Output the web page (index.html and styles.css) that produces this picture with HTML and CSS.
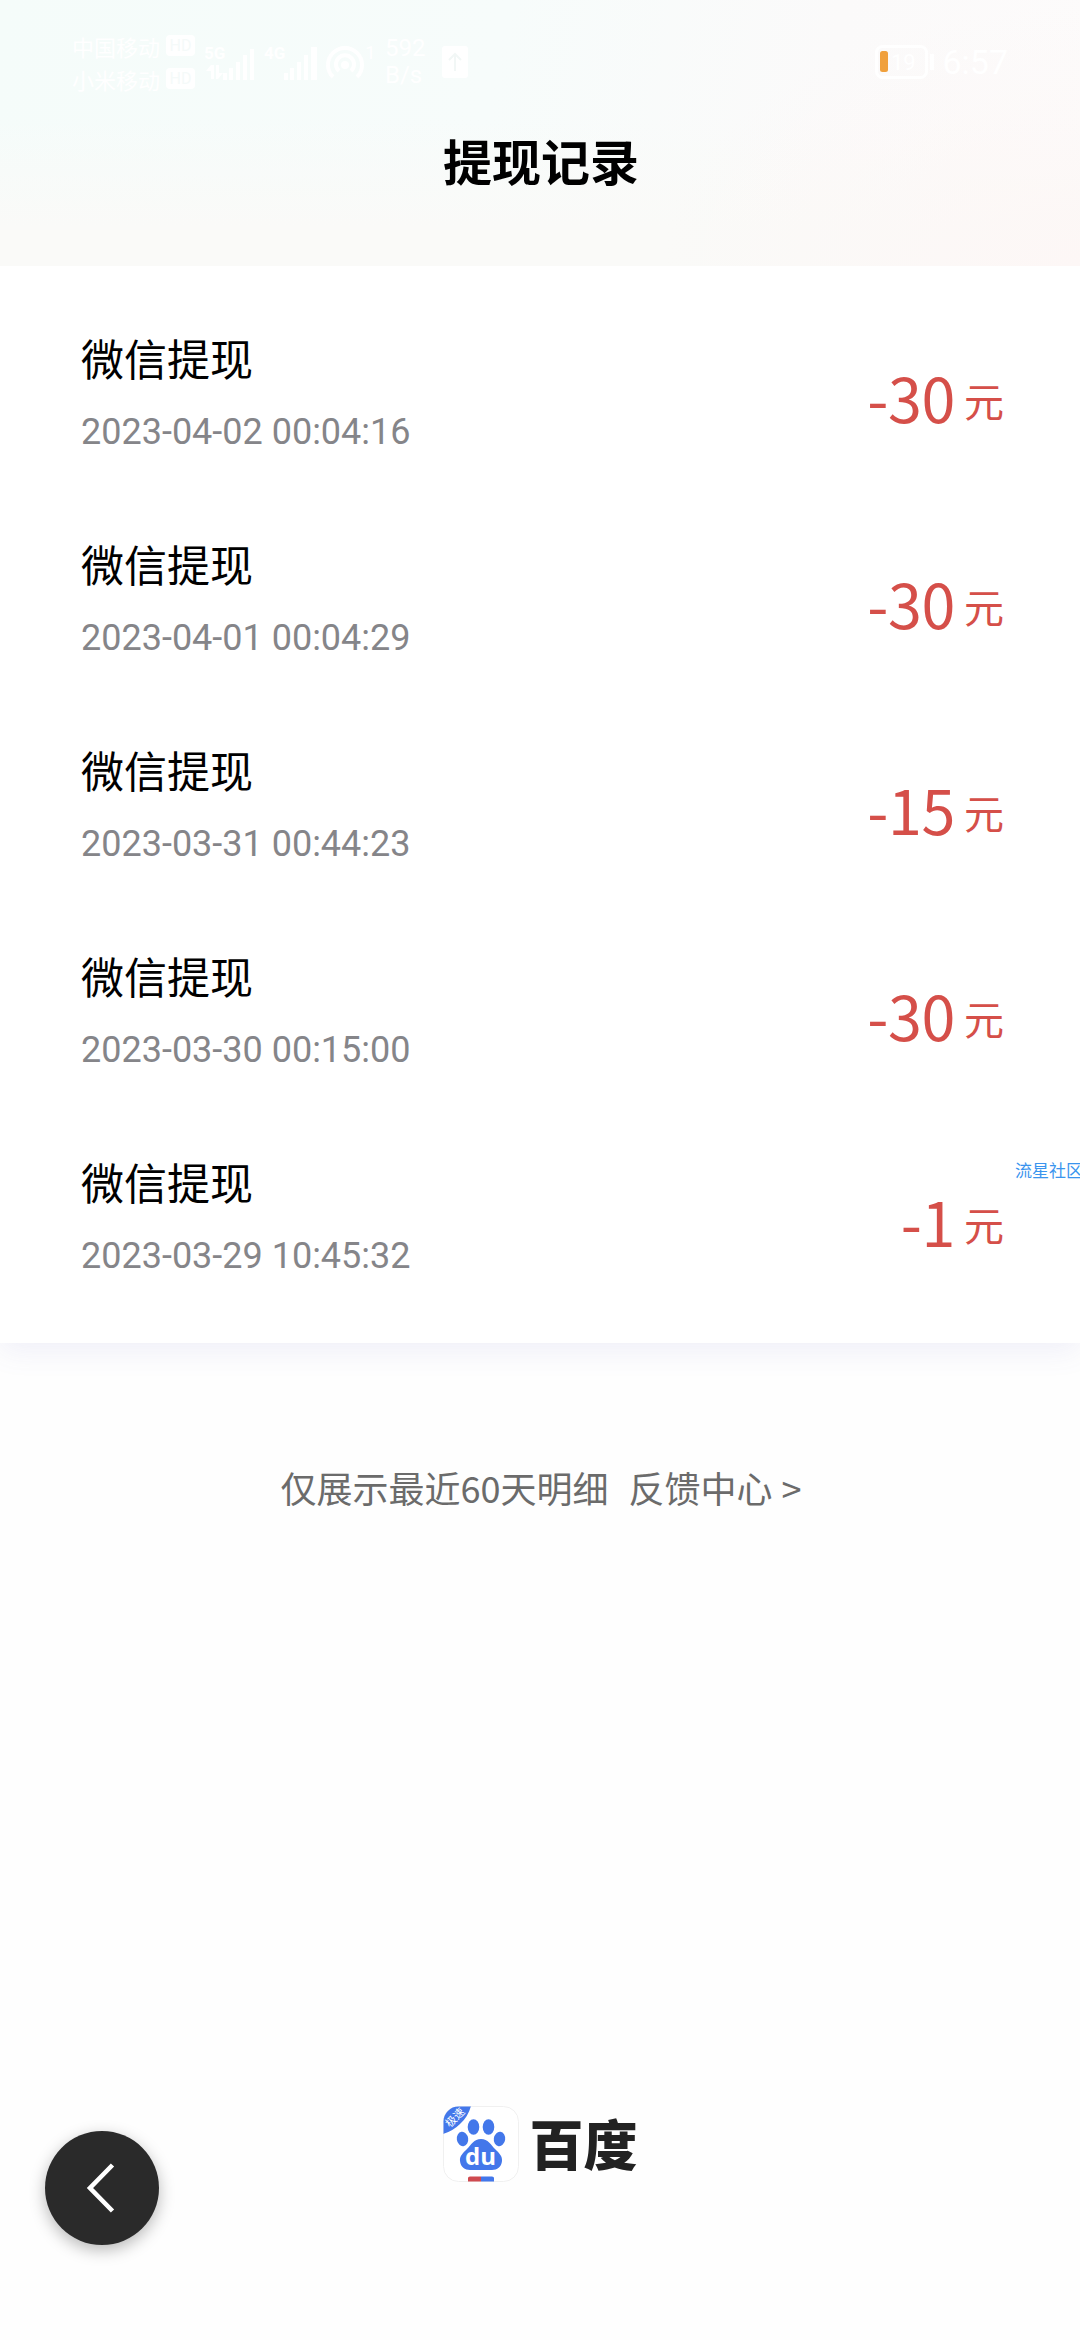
FILE: index.html
```html
<!DOCTYPE html>
<html lang="zh-CN">
<head>
<meta charset="utf-8">
<title>提现记录</title>
<link rel="stylesheet" href="styles.css">
</head>
<body>
<div class="screen">
  <header class="header">
    <div class="status">
      <div class="carriers">
        <div class="carrier">中国移动<span class="hd">HD</span></div>
        <div class="carrier">小米移动<span class="hd">HD</span></div>
      </div>
      <svg class="signals" width="178" height="46" viewBox="0 0 178 46" fill="#fff">
        <text x="-1" y="20" font-size="17" font-weight="700">5G</text>
        <path d="M1 32l5-6h3v14H6v-8zM11 26h3v8h4l-5 6h-2z"/>
        <path d="M18 34h4v7h-4zM24 29h4v12h-4zM31 23h4v18h-4zM38 16h4v25h-4zM45 10h4v31h-4z"/>
        <text x="59" y="20" font-size="17" font-weight="700">4G</text>
        <path d="M79 34h4v7h-4zM85 29h4v12h-4zM92 23h4v18h-4zM99 16h4v25h-4zM106 8h6v33h-6z"/>
        <g fill="none" stroke="#fff" stroke-width="4"><path d="M128 38a17 17 0 1 1 24 0"/><path d="M134 32a9 9 0 1 1 12 0"/></g>
        <circle cx="140" cy="26" r="4"/>
        <text x="160" y="20" font-size="19">1</text>
      </svg>
      <div class="speed"><span>592</span><span>B/s</span></div>
      <svg class="upload" width="26" height="32" viewBox="0 0 26 32"><rect width="26" height="32" rx="3" fill="#fff"/><path d="M13 25V9M7 14l6-6 6 6" fill="none" stroke="#f2f7f6" stroke-width="2"/></svg>
      <div class="clock">
        <svg width="60" height="34" viewBox="0 0 60 34"><rect x="1.500" y="1.500" width="50" height="31" rx="6" fill="none" stroke="#fff" stroke-width="3"/><rect x="5" y="6" width="8" height="21" rx="2.500" fill="#f0a03c"/><text x="16" y="25" font-size="22" fill="#fff">19</text><path d="M55 9h4v16h-4z" fill="#fff"/></svg>
        <span>6:57</span>
      </div>
    </div>
    <h1 class="title">提现记录</h1>
  </header>

  <main class="list">
    <div class="row"><div class="info"><div class="name">微信提现</div><div class="date">2023-04-02 00:04:16</div></div><div class="amount">-30<span class="unit">元</span></div></div>
    <div class="row"><div class="info"><div class="name">微信提现</div><div class="date">2023-04-01 00:04:29</div></div><div class="amount">-30<span class="unit">元</span></div></div>
    <div class="row"><div class="info"><div class="name">微信提现</div><div class="date">2023-03-31 00:44:23</div></div><div class="amount">-15<span class="unit">元</span></div></div>
    <div class="row"><div class="info"><div class="name">微信提现</div><div class="date">2023-03-30 00:15:00</div></div><div class="amount">-30<span class="unit">元</span></div></div>
    <div class="row"><div class="info"><div class="name">微信提现</div><div class="date">2023-03-29 10:45:32</div></div><div class="amount">-1<span class="unit">元</span></div></div>
  </main>

  <p class="note"><span>仅展示最近60天明细</span><a class="feedback">反馈中心<span class="arrow">&gt;</span></a></p>

  <footer class="brand">
    <svg class="logo" width="76" height="76" viewBox="0 0 76 76">
      <defs><clipPath id="tile"><rect x="0.500" y="0.500" width="75" height="75" rx="15"/></clipPath></defs>
      <rect x="0.500" y="0.500" width="75" height="75" rx="15" fill="#fff" stroke="#f0f0f0"/>
      <g clip-path="url(#tile)">
        <path d="M0 0H28Q25 11 17 18Q10 25 0 28Z" fill="#4377ea"/>
        <path d="M25 72q0-1.500 2-1.500H38V76H25Z" fill="#cf4a50"/><path d="M38 70.500H49q2 0 2 1.500V76H38Z" fill="#4377ea"/>
      </g>
      <text transform="translate(7 22) rotate(-45)" class="ribbon">极速</text>
      <g fill="#4377ea">
        <ellipse cx="19.500" cy="33" rx="5.700" ry="7.200" transform="rotate(-8 19.500 33)"/>
        <ellipse cx="30.500" cy="21" rx="5.800" ry="7.700"/>
        <ellipse cx="45.500" cy="21" rx="5.800" ry="7.700"/>
        <ellipse cx="56.500" cy="33" rx="5.700" ry="7.200" transform="rotate(8 56.500 33)"/>
        <path d="M38 33C45 33 48 39 52 43C56 47 59.500 50 59 55C58.500 61 54 64 49 64H27C22 64 17.500 61 17 55C16.500 50 20 47 24 43C28 39 31 33 38 33Z"/>
      </g>
      <text x="37.500" y="59" class="du">du</text>
    </svg>
    <span class="wordmark">百度</span>
  </footer>

  <div class="watermark">流星社区</div>
  <button class="back" aria-label="返回"><svg width="114" height="114" viewBox="0 0 114 114"><path d="M67.500 34L45 57l22.500 23" fill="none" stroke="#fff" stroke-width="4.600"/></svg></button>
</div>
</body>
</html>
```
FILE: styles.css
```css
* { box-sizing: border-box; }
body { margin: 0; background: #fff; font-family: "Noto Sans CJK SC", sans-serif; }
.screen { position: relative; width: 1080px; height: 2340px; overflow: hidden; display: flex; flex-direction: column; background: #fefefe; }
.header { position: relative; z-index: 1; height: 266px; background: radial-gradient(ellipse 420px 260px at 100% 100%, #fdf7f6, rgba(253,247,246,0)), linear-gradient(to bottom, rgba(250,250,248,0) 45%, #fafaf8 85%), linear-gradient(100deg, #f5fcfa 0%, #f7fcfb 45%, #fbfafa 75%, #fdfbfb 100%); }
.status { height: 124px; padding: 0 72px; display: flex; align-items: center; color: #fff; font-family: Roboto, "Noto Sans CJK SC", sans-serif; }
.carrier { display: flex; align-items: center; gap: 6px; height: 33px; font-size: 22px; }
.hd { width: 29px; height: 21px; border-radius: 4px; background: #fff; color: #f5faf9; font-size: 16px; line-height: 21px; text-align: center; }
.signals { margin-left: 10px; }
.speed { margin-left: 2px; display: flex; flex-direction: column; font-size: 24px; line-height: 27px; width: 41px; }
.upload { margin-left: 16px; }
.clock { margin-left: auto; display: flex; align-items: center; font-size: 34px; gap: 7px; }
.title { margin: 0; padding-left: 2px; font-size: 49px; line-height: 72px; font-weight: 700; text-align: center; color: #000; }
.list { height: 1077px; padding-top: 43px; background: #fff; box-shadow: 0 8px 28px rgba(90,90,190,.09); }
.row { height: 206px; padding: 18px 76px 0 81px; display: flex; justify-content: space-between; }
.name { font-size: 43px; line-height: 60px; color: #000; }
.date { margin-top: 21px; font: 36px/48px Roboto, sans-serif; color: #858589; }
.amount { display: flex; align-items: center; gap: 9px; height: 90px; margin-top: 25px; font-size: 61px; line-height: 90px; letter-spacing: -.4px; color: #d54f49; }
.unit { padding-top: 5px; font-size: 40px; line-height: 80px; letter-spacing: 0; }
.note { margin: 116px 0 0; padding-left: 2px; display: flex; justify-content: center; gap: 20px; font-size: 36px; line-height: 56px; color: #6b6b6b; }
.arrow { margin-left: 9px; }
.brand { margin-top: 591px; height: 76px; display: flex; justify-content: center; align-items: center; gap: 11px; }
.wordmark { font-size: 54px; line-height: 74px; height: 76px; font-weight: 900; color: #222; }
.ribbon { font-size: 11px; fill: #fff; }
.du { font: 700 24px "Open Sans", sans-serif; fill: #fff; text-anchor: middle; }
.watermark { position: absolute; left: 1015px; top: 1157px; font-size: 17px; line-height: 25px; white-space: nowrap; color: #3a94ee; }
.back { position: absolute; left: 45px; top: 2131px; width: 114px; height: 114px; padding: 0; border: 0; border-radius: 50%; background: #2a2a2a; box-shadow: 0 5px 16px rgba(0,0,0,.28); }
.back svg { display: block; }
```
